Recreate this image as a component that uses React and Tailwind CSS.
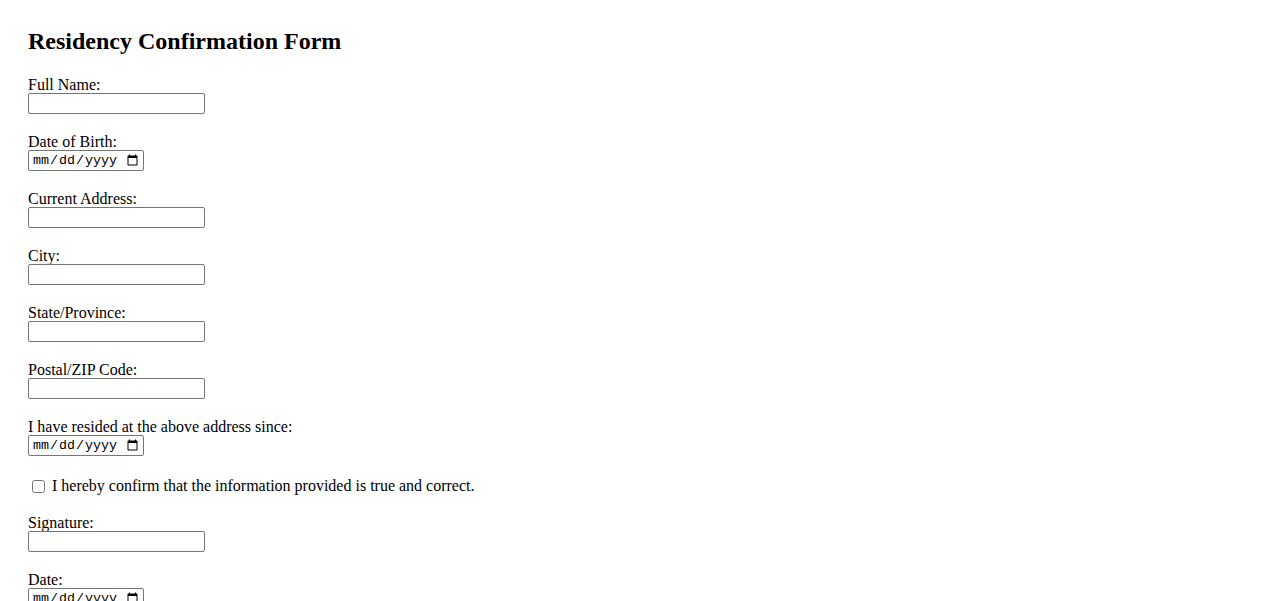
import { useState } from "react";

const fields = [
    { id: "fullName", label: "Full Name:", type: "text" },
    { id: "dob", label: "Date of Birth:", type: "date" },
    { id: "address", label: "Current Address:", type: "text" },
    { id: "city", label: "City:", type: "text" },
    { id: "state", label: "State/Province:", type: "text" },
    { id: "zip", label: "Postal/ZIP Code:", type: "text" },
    { id: "since", label: "I have resided at the above address since:", type: "date" },
];

function Field({ id, label, type }) {
    // text and date inputs share the same frame, only the width differs
    const size =
        type === "date"
            ? "w-[116px] font-['Liberation_Mono',monospace] text-[13.33px] pl-[3px] pr-[2px]"
            : "w-[177px] text-[13.33px] px-[2px] font-['Liberation_Sans',sans-serif]";
    return (
        <div className="flex flex-col items-start mb-[16px]">
            <label htmlFor={id} className="leading-[16px] pt-[4px]">
                {label}
            </label>
            <input
                id={id}
                type={type}
                className={`h-[21px] border border-[#767676] rounded-[2px] bg-white text-black ${size}`}
            />
        </div>
    );
}

export default function App() {
    const [confirmed, setConfirmed] = useState(false);

    return (
        <div className="min-h-screen bg-white text-black font-['Liberation_Serif',serif] text-[16px] pl-[28px] pt-[27px]">
            <h2 className="text-[24px] font-bold leading-[28px] mb-[18px]">
                Residency Confirmation Form
            </h2>

            <form onSubmit={(e) => e.preventDefault()}>
                {fields.map((f) => (
                    <Field key={f.id} {...f} />
                ))}

                {/* confirmation checkbox */}
                <div className="flex items-center h-[23px] pt-[4px] mb-[16px]">
                    <input
                        id="confirm"
                        type="checkbox"
                        checked={confirmed}
                        onChange={(e) => setConfirmed(e.target.checked)}
                        className="w-[13px] h-[13px] ml-[4px] mr-[3px] mt-[1px]"
                    />
                    <label htmlFor="confirm" className="leading-[18px] ml-[4px]">
                        I hereby confirm that the information provided is true and correct.
                    </label>
                </div>

                <Field id="signature" label="Signature:" type="text" />
                <Field id="date" label="Date:" type="date" />
            </form>
        </div>
    );
}
